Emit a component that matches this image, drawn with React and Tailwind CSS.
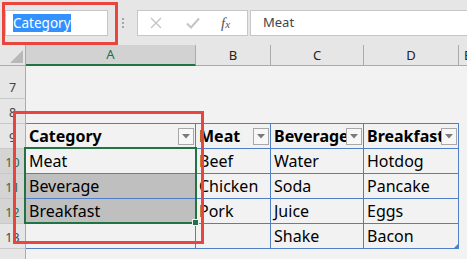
import React from "react";

const BLUE = "border-[#4f7fc6]";

function Drop() {
  return (
    <div className="w-[16px] h-[17px] mr-[1px] shrink-0 bg-[#f7f7f7] border border-[#a8a8a8] flex items-center justify-center">
      <svg width="8" height="5" viewBox="0 0 8 5">
        <polygon points="0,0 8,0 4,4.5" fill="#7a7a7a" />
      </svg>
    </div>
  );
}

function RowHead({ n, sel, h }) {
  return (
    <div
      className={`w-[26px] shrink-0 ${h} border-r border-r-[#ababab] border-b border-b-[#c8c8c8] flex items-end justify-center pb-[4px] text-[12.5px] leading-none ${
        sel ? "bg-[#d4d4d4] text-[#2d6a47]" : "bg-[#e6e6e6] text-[#444]"
      }`}
    >
      {n}
    </div>
  );
}

function Cell({ w, children, gray, head, noBorder }) {
  return (
    <div
      className={`${w} shrink-0 h-[25px] ${noBorder ? "" : `border-r border-b ${BLUE}`} ${
        gray ? "bg-[#bfbfbf]" : ""
      } flex items-center overflow-hidden`}
    >
      {head ? (
        <>
          <div className="flex-1 min-w-0 overflow-hidden whitespace-nowrap pl-[3px] font-bold text-[16px] leading-[24px] text-black">
            {children}
          </div>
          <Drop />
        </>
      ) : (
        <div className="pl-[3px] whitespace-nowrap text-[16px] leading-[24px] text-black">{children}</div>
      )}
    </div>
  );
}

const W = ["w-[170px]", "w-[75px]", "w-[93px]", "w-[95px]"];

function DataRow({ n, sel, cells, head, grayA }) {
  return (
    <div className="flex h-[25px]">
      <RowHead n={n} sel={sel} h="h-[25px]" />
      {cells.map((c, i) => (
        <Cell key={i} w={W[i]} head={head} gray={grayA && i === 0}>
          {c}
        </Cell>
      ))}
      <div className="flex-1" />
    </div>
  );
}

export default function App() {
  return (
    <div className="relative w-[467px] h-[259px] overflow-hidden bg-[#f2f2f2] font-['Noto_Sans',sans-serif]">
      {/* formula bar */}
      <div className="h-[45px] bg-[#e6e6e6] flex items-start pt-[10px]">
        <div className="ml-[5px] w-[103px] h-[26px] bg-white border border-[#c6c6c6] flex items-center pl-[7px]">
          <span className="bg-[#3390ff] text-white text-[13.5px] leading-[18px] inline-block">Category</span>
        </div>
        <div className="w-[29px] h-[26px] flex flex-col items-center justify-center gap-[2px]">
          <div className="w-[2px] h-[2px] bg-[#a6a6a6]" />
          <div className="w-[2px] h-[2px] bg-[#a6a6a6]" />
          <div className="w-[2px] h-[2px] bg-[#a6a6a6]" />
        </div>
        <div className="w-[111px] h-[26px] bg-white border border-[#c6c6c6] flex items-center pl-[12px]">
          <svg width="12" height="12" viewBox="0 0 12 12">
            <path d="M1 1 L11 11 M11 1 L1 11" stroke="#c4c4c4" strokeWidth="1.4" fill="none" />
          </svg>
          <svg className="ml-[24px]" width="14" height="12" viewBox="0 0 14 12">
            <path d="M1 6.5 L5 10.5 L13 1.5" stroke="#c4c4c4" strokeWidth="2" fill="none" />
          </svg>
          <span className="ml-[21px] font-['Liberation_Serif',serif] italic text-[15px] leading-none text-[#555]">
            f<span className="text-[11px]">x</span>
          </span>
        </div>
        <div className="ml-[2px] flex-1 h-[26px] bg-white border border-r-0 border-[#c6c6c6] flex items-center pl-[12px] text-[13px] text-[#444]">
          Meat
        </div>
      </div>

      {/* column headers */}
      <div className="flex h-[21px] bg-[#e6e6e6] text-[13px] leading-none">
        <div className="w-[26px] shrink-0 border-r border-b border-[#ababab] flex items-end justify-end pr-[2px] pb-[2px]">
          <svg width="13" height="13" viewBox="0 0 13 13">
            <polygon points="13,0 13,13 0,13" fill="#b8b8b8" />
          </svg>
        </div>
        <div className="w-[170px] shrink-0 bg-[#d2d2d2] border-r border-r-[#ababab] border-b-2 border-b-[#217346] flex items-center justify-center text-[#217346]">
          A
        </div>
        <div className="w-[75px] shrink-0 border-r border-b border-[#ababab] flex items-center justify-center text-[#222]">B</div>
        <div className="w-[93px] shrink-0 border-r border-b border-[#ababab] flex items-center justify-center text-[#222]">C</div>
        <div className="w-[95px] shrink-0 border-r border-b border-[#ababab] flex items-center justify-center text-[#222]">D</div>
        <div className="flex-1 border-b border-[#ababab] flex items-center pl-[5px] text-[#222]">E</div>
      </div>

      {/* rows */}
      <div className="flex h-[33px]">
        <RowHead n="7" h="h-[33px]" />
        <div className="flex-1" />
      </div>
      <div className="flex h-[25px]">
        <RowHead n="8" h="h-[25px]" />
        {W.map((w, i) => (
          <div key={i} className={`${w} shrink-0 h-[25px] border-b ${BLUE}`} />
        ))}
        <div className="flex-1" />
      </div>
      <DataRow n="9" head cells={["Category", "Meat", "Beverage", "Breakfast"]} />
      <DataRow n="10" sel cells={["Meat", "Beef", "Water", "Hotdog"]} />
      <DataRow n="11" sel grayA cells={["Beverage", "Chicken", "Soda", "Pancake"]} />
      <DataRow n="12" sel grayA cells={["Breakfast", "Pork", "Juice", "Eggs"]} />
      <DataRow n="13" cells={["", "", "Shake", "Bacon"]} />
      <div className="flex h-[11px]">
        <div className="w-[26px] h-[11px] bg-[#e6e6e6] border-r border-[#ababab]" />
      </div>

      {/* overlays */}
      <div className="absolute left-[24px] top-[147px] w-[173px] h-[77px] border-2 border-[#217346]" />
      <div className="absolute left-[192px] top-[219px] w-[7px] h-[7px] bg-[#217346] border border-[#f2f2f2]" />
      <svg className="absolute left-[454px] top-[244px]" width="4" height="4" viewBox="0 0 4 4">
        <polygon points="4,0 4,4 0,4" fill="#4f7fc6" />
      </svg>
      <div className="absolute left-[2px] top-[2px] w-[116px] h-[43px] border-[3px] border-[#e8453e]" />
      <div className="absolute left-[13px] top-[111px] w-[191px] h-[133px] border-[3px] border-[#e8453e]" />
    </div>
  );
}
